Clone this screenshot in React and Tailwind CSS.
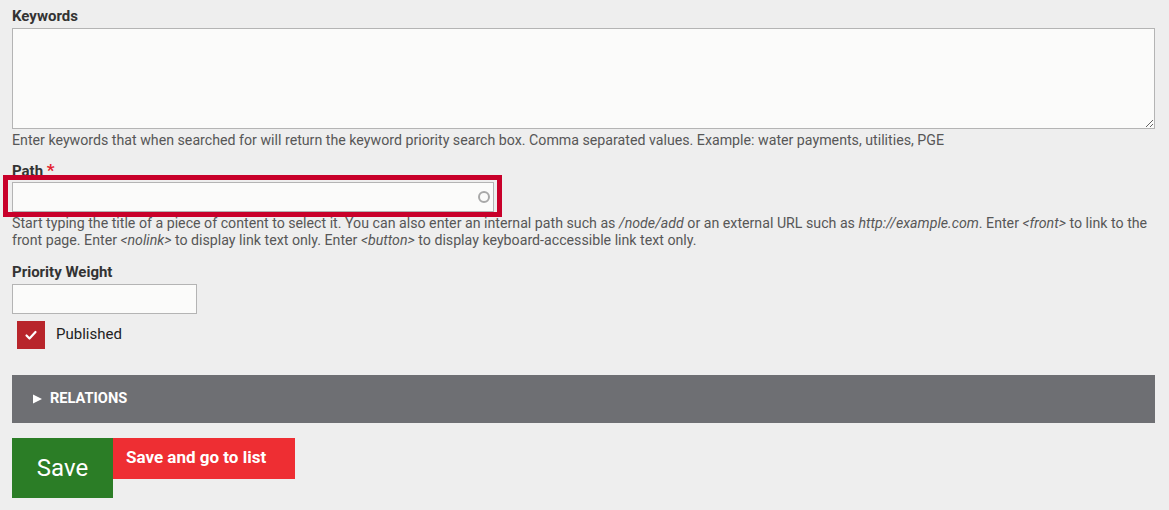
export default function App() {
  return (
    <div className="min-h-[510px] bg-[#eeeeee] pl-3 pr-[14px] pt-[6px] font-['Roboto',sans-serif] text-[14.2px] text-[#333]">
      <label className="block text-[15px] font-bold leading-5">Keywords</label>
      <textarea className="mt-[2px] block h-[101px] w-full border border-[#b4b4b4] bg-[#fbfbfa]" />
      <p className="mt-[3px] leading-[17px] text-[#575757]">
        Enter keywords that when searched for will return the keyword priority search box. Comma separated values. Example: water payments, utilities, PGE
      </p>

      <label className="mt-[11px] block text-[15px] font-bold leading-5">
        Path <span className="text-[17px] text-[#e4202f]">*</span>
      </label>
      <div className="relative mt-[1px] w-[482px]">
        <input className="block h-[30px] w-full border border-[#b4b4b4] bg-[#fbfbfa]" />
        <svg className="absolute right-[3px] top-[8px]" width="14" height="14" viewBox="0 0 14 14">
          <circle cx="7" cy="7" r="5" fill="none" stroke="#a8a8a8" strokeWidth="2" />
        </svg>
        <div className="pointer-events-none absolute left-[-9px] top-[-7px] h-[42px] w-[499px] border-[5px] border-[#c8002a]" />
      </div>
      <p className="mt-[3px] leading-[17px] text-[#575757]">
        Start typing the title of a piece of content to select it. You can also enter an internal path such as <em>/node/add</em> or an external URL such as <em>http://example.com</em>. Enter <em>&lt;front&gt;</em> to link to the front page. Enter <em>&lt;nolink&gt;</em> to display link text only. Enter <em>&lt;button&gt;</em> to display keyboard-accessible link text only.
      </p>

      <label className="mt-[13px] block text-[15px] font-bold leading-5">Priority Weight</label>
      <input className="mt-[2px] block h-[30px] w-[185px] border border-[#b4b4b4] bg-[#fbfbfa]" />

      <div className="mt-[7px] flex items-center gap-[11px] pl-[5px]">
        <span className="flex h-[28px] w-[28px] items-center justify-center bg-[#b8252b]">
          <svg width="14" height="14" viewBox="0 0 14 14">
            <path d="M2.5 7.5 L5.5 10.5 L11.5 4" fill="none" stroke="#fff" strokeWidth="2.2" strokeLinecap="round" strokeLinejoin="round" />
          </svg>
        </span>
        <span className="pb-[2px] text-[15px] text-[#222]">Published</span>
      </div>

      <div className="mt-[26px] flex h-[48px] items-center gap-[8px] bg-[#6e6f73] pl-[21px] text-white">
        <svg width="9" height="10" viewBox="0 0 9 10">
          <path d="M0 0.5 L9 5 L0 9.5 Z" fill="#fff" />
        </svg>
        <span className="text-[14.6px] font-bold">RELATIONS</span>
      </div>

      <div className="mt-[15px] flex items-start">
        <button className="h-[60px] w-[101px] bg-[#2b7d26] text-[24px] text-white">Save</button>
        <button className="h-[41px] w-[182px] bg-[#ee2e33] pb-[1px] pl-[13px] text-left text-[17px] font-bold text-white">
          Save and go to list
        </button>
      </div>
    </div>
  );
}
